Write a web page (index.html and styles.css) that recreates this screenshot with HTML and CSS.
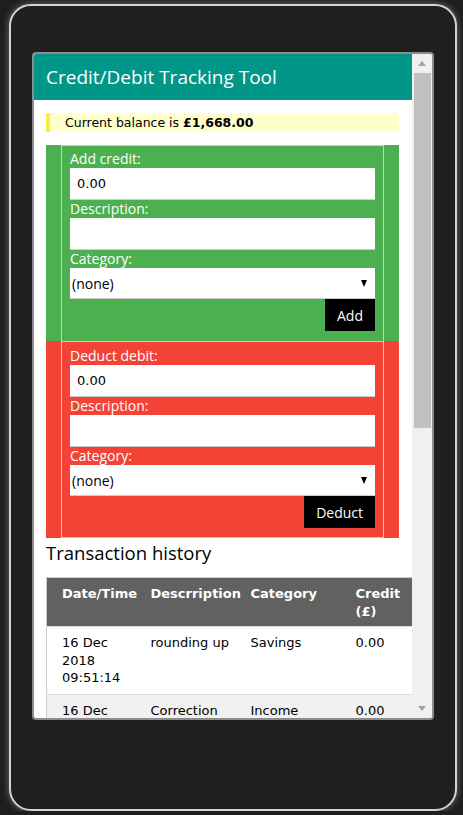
FILE: index.html
```html
<!DOCTYPE html>
<html lang="en">
<head>
    <meta charset="UTF-8">
    <meta name="viewport" content="width=device-width, initial-scale=1.0">
    <title>Credit/Debit Tracking Tool</title>
    <link rel="stylesheet" href="styles.css">
</head>
<body>
    <div class="device">
        <div class="screen">
            <div class="page">
                <header class="app-bar">
                    <h1>Credit/Debit Tracking Tool</h1>
                </header>

                <div class="content">
                    <p class="balance">Current balance is <b>£1,668.00</b></p>

                    <!-- credit form -->
                    <section class="panel panel-credit">
                        <form class="panel-form">
                            <label for="creditAmount">Add credit:</label>
                            <input id="creditAmount" type="text" value="0.00">
                            <label for="creditDesc">Description:</label>
                            <input id="creditDesc" type="text">
                            <label for="creditCat">Category:</label>
                            <div class="select-wrap">
                                <select id="creditCat">
                                    <option>(none)</option>
                                    <option>Income</option>
                                    <option>Savings</option>
                                </select>
                            </div>
                            <div class="actions">
                                <button type="button">Add</button>
                            </div>
                        </form>
                    </section>

                    <!-- debit form -->
                    <section class="panel panel-debit">
                        <form class="panel-form">
                            <label for="debitAmount">Deduct debit:</label>
                            <input id="debitAmount" type="text" value="0.00">
                            <label for="debitDesc">Description:</label>
                            <input id="debitDesc" type="text">
                            <label for="debitCat">Category:</label>
                            <div class="select-wrap">
                                <select id="debitCat">
                                    <option>(none)</option>
                                    <option>Bills</option>
                                    <option>Food</option>
                                </select>
                            </div>
                            <div class="actions">
                                <button type="button">Deduct</button>
                            </div>
                        </form>
                    </section>

                    <h2>Transaction history</h2>
                    <table class="history">
                        <colgroup>
                            <col class="col-date">
                            <col class="col-desc">
                            <col class="col-cat">
                            <col class="col-money">
                        </colgroup>
                        <thead>
                            <tr>
                                <th>Date/Time</th>
                                <th>Descrription</th>
                                <th>Category</th>
                                <th>Credit (£)</th>
                            </tr>
                        </thead>
                        <tbody>
                            <tr>
                                <td>16 Dec 2018 09:51:14</td>
                                <td>rounding up</td>
                                <td>Savings</td>
                                <td>0.00</td>
                            </tr>
                            <tr>
                                <td>16 Dec</td>
                                <td>Correction</td>
                                <td>Income</td>
                                <td>0.00</td>
                            </tr>
                        </tbody>
                    </table>
                </div>
            </div>

            <div class="scrollbar">
                <div class="scroll-btn"><span class="arrow-up"></span></div>
                <div class="scroll-thumb"></div>
                <div class="scroll-track"></div>
                <div class="scroll-btn"><span class="arrow-down"></span></div>
            </div>
        </div>
    </div>
</body>
</html>
```

FILE: styles.css
```css
* {
    margin: 0;
    padding: 0;
    box-sizing: border-box;
}

body {
    background-color: #1e1e1e;
    font-family: "DejaVu Sans", Verdana, sans-serif;
    font-size: 13px;
    color: #000;
}

/* phone frame */
.device {
    width: 448px;
    height: 807px;
    margin: 4px 0 0 9px;
    padding: 46px 0 0 21px;
    border: 2px solid #d2d2d2;
    border-radius: 22px;
    background-color: #1f1f1f;
    box-shadow: 0 0 6px 1px rgba(160, 160, 160, 0.5);
}

.screen {
    display: flex;
    width: 402px;
    height: 668px;
    border: 2px solid #8c8c8c;
    border-radius: 4px;
    background-color: #fff;
    overflow: hidden;
}

.page {
    flex: none;
    width: 378px;
    overflow: hidden;
}

/* header */
.app-bar {
    height: 46px;
    padding: 0 12px;
    background-color: #009688;
}

.app-bar h1 {
    font-family: "Open Sans", "Segoe UI", sans-serif;
    font-size: 19px;
    font-weight: 400;
    line-height: 46px;
    color: #fff;
    white-space: nowrap;
}

.content {
    padding: 13px 0 0 12px;
}

.balance {
    width: 353px;
    margin-bottom: 13px;
    padding-left: 15px;
    border-left: 4px solid #ffeb3b;
    background-color: #ffffcc;
    font-size: 12.5px;
    line-height: 19px;
}

/* credit / debit panels */
.panel {
    width: 353px;
    padding: 0 15px;
}

.panel-credit {
    background-color: #4caf50;
}

.panel-debit {
    background-color: #f44336;
}

.panel-form {
    padding: 4px 8px 10px;
    border: 1px solid #ccc;
    border-bottom: none;
}

.panel-debit .panel-form {
    padding: 5px 8px 9px;
    border-bottom: 1px solid #ccc;
}

.panel-form label {
    display: block;
    font-family: "Open Sans", "Segoe UI", sans-serif;
    font-size: 14px;
    line-height: 18px;
    color: #fff;
}

.panel-form input {
    display: block;
    width: 100%;
    height: 32px;
    padding: 0 7px;
    border: none;
    border-bottom: 1px solid #ccc;
    font-family: "DejaVu Sans", Verdana, sans-serif;
    font-size: 13px;
    color: #000;
    background-color: #fff;
}

.select-wrap {
    position: relative;
}

.select-wrap select {
    display: block;
    width: 100%;
    height: 31px;
    padding: 0 2px;
    border: none;
    border-bottom: 1px solid #ccc;
    border-radius: 0;
    appearance: none;
    -webkit-appearance: none;
    font-family: "Open Sans", "Segoe UI", sans-serif;
    font-size: 14px;
    color: #000;
    background-color: #fff;
}

.select-wrap::after {
    content: "";
    position: absolute;
    right: 8px;
    top: 12px;
    border-left: 3.5px solid transparent;
    border-right: 3.5px solid transparent;
    border-top: 7px solid #000;
    pointer-events: none;
}

.actions {
    display: flex;
    justify-content: flex-end;
}

.actions button {
    height: 32px;
    padding: 0 12px;
    border: none;
    background-color: #000;
    color: #fff;
    font-family: "Open Sans", "Segoe UI", sans-serif;
    font-size: 14px;
    cursor: pointer;
}

/* history table */
h2 {
    margin: 1px 0 10px;
    font-family: "Open Sans", "Segoe UI", sans-serif;
    font-size: 18.5px;
    font-weight: 400;
    line-height: 28px;
    white-space: nowrap;
}

.history {
    width: 366px;
    table-layout: fixed;
    border-collapse: collapse;
    border: 1px solid #ccc;
}

.col-date { width: 96px; }
.col-desc { width: 100px; }
.col-cat { width: 105px; }
.col-money { width: 65px; }

.history tr {
    border-bottom: 1px solid #ddd;
}

.history th,
.history td {
    padding: 7px 8px;
    text-align: left;
    vertical-align: top;
    line-height: 17.5px;
}

.history th:first-child,
.history td:first-child {
    padding-left: 15px;
}

.history th {
    padding-bottom: 6px;
    background-color: #616161;
    color: #fff;
    font-weight: bold;
}

.history tbody tr:nth-child(even) {
    background-color: #f1f1f1;
}

/* fake window scrollbar */
.scrollbar {
    display: flex;
    flex-direction: column;
    width: 20px;
    background-color: #f0f0f0;
}

.scroll-btn {
    display: flex;
    align-items: center;
    justify-content: center;
    height: 19px;
    flex: none;
}

.arrow-up,
.arrow-down {
    border-left: 4.5px solid transparent;
    border-right: 4.5px solid transparent;
}

.arrow-up {
    border-bottom: 5px solid #a3a3a3;
}

.arrow-down {
    border-top: 5px solid #a3a3a3;
}

.scroll-thumb {
    height: 355px;
    margin: 0 1px 0 2px;
    background-color: #c1c1c1;
}

.scroll-track {
    flex: 1;
}
```
